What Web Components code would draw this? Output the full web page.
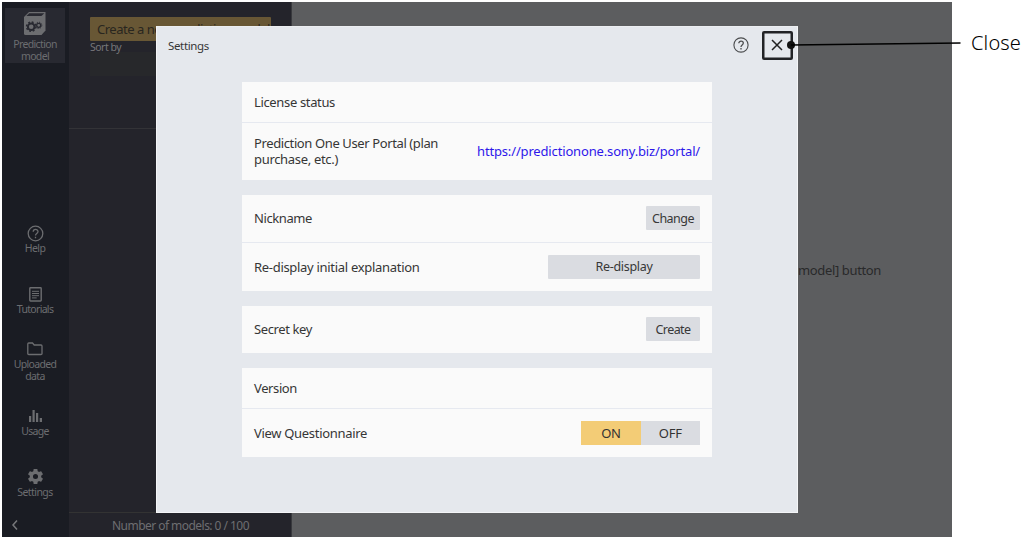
<!DOCTYPE html>
<html lang="en">
<head>
<meta charset="utf-8">
<title>Prediction One - Settings</title>
<style>
html,body{margin:0;padding:0;background:#fff;overflow:hidden}
body{width:1023px;height:539px;position:relative;font-family:"Noto Sans","Open Sans",sans-serif;font-size:13px;color:#333}
</style>
</head>
<body>
<app-shell></app-shell>
<settings-dialog></settings-dialog>
<close-callout></close-callout>
<script>
function define(name, html, setup) {
  const template = document.createElement('template');
  template.innerHTML = html;
  customElements.define(name, class extends HTMLElement {
    connectedCallback() {
      if (this.shadowRoot) return;
      this.attachShadow({mode: 'open'}).append(template.content.cloneNode(true));
      if (setup) setup(this, this.shadowRoot);
    }
  });
}

/* One line of text whose tracking is adjusted to a fixed measure. */
define('fit-text', `<style>:host{display:block;white-space:nowrap}span{display:inline-block;white-space:pre}</style><span><slot></slot></span>`, (host, root) => {
  const span = root.querySelector('span');
  const target = parseFloat(host.getAttribute('w'));
  const count = host.textContent.length;
  const natural = span.getBoundingClientRect().width;
  const spacing = (target - natural) / count;
  span.style.letterSpacing = spacing.toFixed(3) + 'px';
  host.style.width = target + 'px';
});

define('nav-item', `<style>
:host{display:flex;flex-direction:column;align-items:center;width:60px;color:#6c6d70;font-size:10.5px;line-height:12px}
slot[name=icon]{display:flex;justify-content:center}
</style><slot name="icon"></slot><slot></slot>`);

define('side-nav', `<style>
:host{display:flex;flex-direction:column;align-items:center;width:67px;height:535px;background:#1a1c23;box-sizing:border-box;padding-top:6px}
nav-item{margin-left:-1px}
nav-item svg{display:block}
.model{background:#282931;height:55px;box-sizing:border-box;padding-top:3px}
.back{align-self:flex-start;margin:21px 0 0 9px}
</style>
<nav-item class="model"><svg slot="icon" width="24" height="26" viewBox="0 0 24 26"><path fill="#6c6d70" d="M6 1H22.5V19.5L18.5 24H2.5Q1 24 1 22.5V6Z"/><path fill="#282931" d="M6.3 2.3H21.4L18.4 5H3.4Z"/><g fill="none" stroke="#282931"><circle cx="8.2" cy="15.7" r="3.3" stroke-width="2"/><circle cx="8.2" cy="15.7" r="4.7" stroke-width="1.4" stroke-dasharray="1.9 1.79"/><circle cx="15.7" cy="14.3" r="2" stroke-width="1.3"/><circle cx="15.7" cy="14.3" r="3.1" stroke-width="1" stroke-dasharray="1.2 1.23"/></g></svg><fit-text w="43.5" style="margin-top:1px">Prediction</fit-text><fit-text w="28">model</fit-text></nav-item>
<nav-item style="margin-top:162px"><svg slot="icon" width="17" height="17" viewBox="0 0 17 17" fill="none" stroke="#6c6d70" stroke-width="1.3"><circle cx="8.5" cy="8.5" r="7.3"/><path d="M6.200 6.800C6.200 3.500 11 3.700 11 6.500C11 8.500 8.500 8.500 8.500 10.500M8.500 11.800V13.200"/></svg><fit-text w="20.500">Help</fit-text></nav-item>
<nav-item style="margin-top:33px"><svg slot="icon" width="13" height="15" viewBox="0 0 13 15" fill="none" stroke="#6c6d70"><rect x=".8" y=".8" width="11.4" height="13.200" rx=".7" stroke-width="1.4"/><path d="M3 4.300H10M3 6.500H10M3 8.700H10M3 10.900H7.700"/></svg><fit-text w="36.500" style="margin-top:1px">Tutorials</fit-text></nav-item>
<nav-item style="margin-top:27px"><svg slot="icon" width="16" height="14" viewBox="0 0 16 14" fill="none" stroke="#6c6d70" stroke-width="1.3"><path d="M.8 11.800V2Q.8 1 1.800 1H5.500L7.200 3H14Q15 3 15 4V11.800Q15 12.500 14 12.500H1.800Q.8 12.500 .8 11.800Z"/></svg><fit-text w="42.500" style="margin-top:2px">Uploaded</fit-text><fit-text w="19.500">data</fit-text></nav-item>
<nav-item style="margin-top:27px"><svg slot="icon" width="15" height="14" viewBox="0 0 15 14"><path fill="#6c6d70" d="M1 7H3.200V13H1ZM4.500 1H6.700V13H4.500ZM8 4H10.200V13H8ZM11.700 9H14V13H11.700Z"/></svg><fit-text w="27.500" style="margin-top:2px">Usage</fit-text></nav-item>
<nav-item style="margin-top:30px"><svg slot="icon" width="19" height="19" viewBox="0 0 24 24"><path fill="#6c6d70" d="M19.140 12.940c.04-.3.06-.61.06-.94 0-.32-.02-.64-.07-.94l2.030-1.580c.18-.14.23-.41.12-.61l-1.920-3.320c-.12-.22-.37-.29-.59-.22l-2.390.96c-.5-.38-1.030-.7-1.620-.94l-.36-2.540c-.04-.24-.24-.41-.48-.41h-3.840c-.24 0-.43.17-.47.41l-.36 2.540c-.59.24-1.130.57-1.620.94l-2.390-.96c-.22-.08-.47 0-.59.22L2.740 8.870c-.12.21-.08.47.12.61l2.030 1.580c-.05.3-.09.63-.09.94s.02.64.07.94l-2.030 1.580c-.18.14-.23.41-.12.61l1.920 3.320c.12.22.37.29.59.22l2.390-.96c.5.38 1.030.7 1.620.94l.36 2.540c.05.24.24.41.48.41h3.840c.24 0 .44-.17.47-.41l.36-2.540c.59-.24 1.130-.56 1.620-.94l2.390.96c.22.08.47 0 .59-.22l1.920-3.320c.12-.22.07-.47-.12-.61l-2.010-1.580zM12 15.200a3.200 3.200 0 1 1 0-6.400 3.200 3.200 0 0 1 0 6.400z"/></svg><fit-text w="35.500">Settings</fit-text></nav-item>
<svg class="back" width="8" height="12" viewBox="0 0 8 12" fill="none" stroke="#77787b" stroke-width="1.500"><path d="M6 1.500L2 6L6 10.500"/></svg>`);

define('model-list', `<style>
:host{display:flex;flex-direction:column;width:222px;height:535px;background:#24242b;border-right:1px solid #38393d;box-sizing:content-box}
.top{height:127px;box-sizing:border-box;border-bottom:1px solid #333337;padding:15px 0 0 21px;flex:none}
.create{width:181px;height:24px;box-sizing:border-box;background:#685735;border-radius:1px;padding-left:7px;line-height:25px;color:#29261f;font-size:13px}
.sort{font-size:10.500px;line-height:12px;color:#77777a}
.select{width:181px;height:24px;background:#27282b;margin-top:-1px}
.foot{margin-top:auto;height:25px;box-sizing:border-box;border-top:1px solid #333333;padding-left:43px;line-height:26px;font-size:12px;color:#6e6e71}
</style>
<div class="top"><div class="create"><fit-text w="173">Create a new prediction model</fit-text></div><fit-text class="sort" w="31">Sort by</fit-text><div class="select"></div></div>
<div class="foot"><fit-text w="137">Number of models: 0 / 100</fit-text></div>`);

define('app-shell', `<style>
:host{display:flex;width:950px;height:535px;margin:2px 0 0 2px;background:#5c5d5f;float:left}
main{flex:1;display:flex;justify-content:flex-end;align-items:center;color:#29292a;padding-right:71px}
main fit-text{line-height:20px;font-size:13px}
</style><side-nav></side-nav><model-list></model-list><main><fit-text w="83">model] button</fit-text></main>`);

define('push-button', `<style>
:host{display:flex;align-items:center;justify-content:center;box-sizing:border-box;width:54px;height:24px;background:#dadce1;border-radius:1px;font-size:12.500px;color:#383838;padding-top:1px}
:host([wide]){width:152px}
</style><slot></slot>`);

define('toggle-switch', `<style>
:host{display:flex;width:119px;height:24px;font-size:13px;color:#333}
div{flex:1;display:flex;align-items:center;justify-content:center;background:#dadce1;box-sizing:border-box}
.on{background:#f3cc76}
</style><div class="on"><fit-text w="19">ON</fit-text></div><div><fit-text w="23">OFF</fit-text></div>`);

define('setting-row', `<style>
:host{display:flex;align-items:center;justify-content:space-between;box-sizing:border-box;padding:0 12px;height:48px;line-height:16px}
:host([rule]){border-bottom:1px solid #e6e9f0}
</style><div><slot></slot></div><slot name="control"></slot>`);

define('setting-card', `<style>:host{display:block;width:470px;background:#fafafa}</style><slot></slot>`);

define('settings-dialog', `<style>
:host{position:absolute;left:156px;top:26px;width:642px;height:487px;box-sizing:border-box;background:#e5e8ed;border:1px solid #f4f5f7;border-top-color:#eceef1;color:#363636}
header{display:flex;align-items:center;height:36px;padding:0 12px 0 11px;font-size:11.500px}
header svg{display:block}
.help{margin-left:auto;margin-right:22px}
.close{margin-right:2px}
.cards{display:flex;flex-direction:column;gap:15px;padding:19px 0 0 85px}
a{color:#2d17ea;text-decoration:none}
</style>
<header><fit-text w="41">Settings</fit-text>
<svg class="help" width="16" height="16" viewBox="0 0 16 16" fill="none" stroke="#4b4c4e"><circle cx="8" cy="8" r="7.100" stroke-width="1.100"/><path stroke-width="1.300" d="M5.800 6.300C5.800 3.300 10.300 3.500 10.300 6.100C10.300 8 8 8 8 9.900M8 11V12.400"/></svg>
<svg class="close" width="12" height="12" viewBox="0 0 12 12" stroke="#222" stroke-width="1.500"><path d="M1 1L11 11M11 1L1 11"/></svg></header>
<div class="cards">
<setting-card><setting-row rule style="height:41px"><fit-text w="81">License status</fit-text></setting-row><setting-row style="height:56.500px"><fit-text w="184">Prediction One User Portal (plan</fit-text><fit-text w="84">purchase, etc.)</fit-text><a slot="control"><fit-text w="223">https://predictionone.sony.biz/portal/</fit-text></a></setting-row></setting-card>
<setting-card><setting-row rule><fit-text w="58">Nickname</fit-text><push-button slot="control"><fit-text w="42">Change</fit-text></push-button></setting-row><setting-row><fit-text w="165.500">Re-display initial explanation</fit-text><push-button wide slot="control"><fit-text w="57">Re-display</fit-text></push-button></setting-row></setting-card>
<setting-card><setting-row style="height:47.500px"><fit-text w="58">Secret key</fit-text><push-button slot="control"><fit-text w="35">Create</fit-text></push-button></setting-row></setting-card>
<setting-card><setting-row rule style="height:41px"><fit-text w="43">Version</fit-text></setting-row><setting-row><fit-text w="113">View Questionnaire</fit-text><toggle-switch slot="control"></toggle-switch></setting-row></setting-card>
</div>`);

define('close-callout', `<style>
:host{position:absolute;left:762px;top:31px;width:261px;height:29px;display:flex;align-items:center;color:#111}
svg{display:block;flex:none}
fit-text{font-size:20px;font-weight:300;color:#000;line-height:24px;margin:-5px 0 0 9px}
</style>
<svg width="200" height="29" viewBox="0 0 200 29"><rect x="1.250" y="1.250" width="28.500" height="26.500" rx=".8" fill="none" stroke="#222326" stroke-width="2.500"/><circle cx="29" cy="14" r="4" fill="#111"/><path d="M29 14L198.500 12" stroke="#000" stroke-width="1.700"/></svg><fit-text w="50">Close</fit-text>`);
</script>
</body>
</html>
